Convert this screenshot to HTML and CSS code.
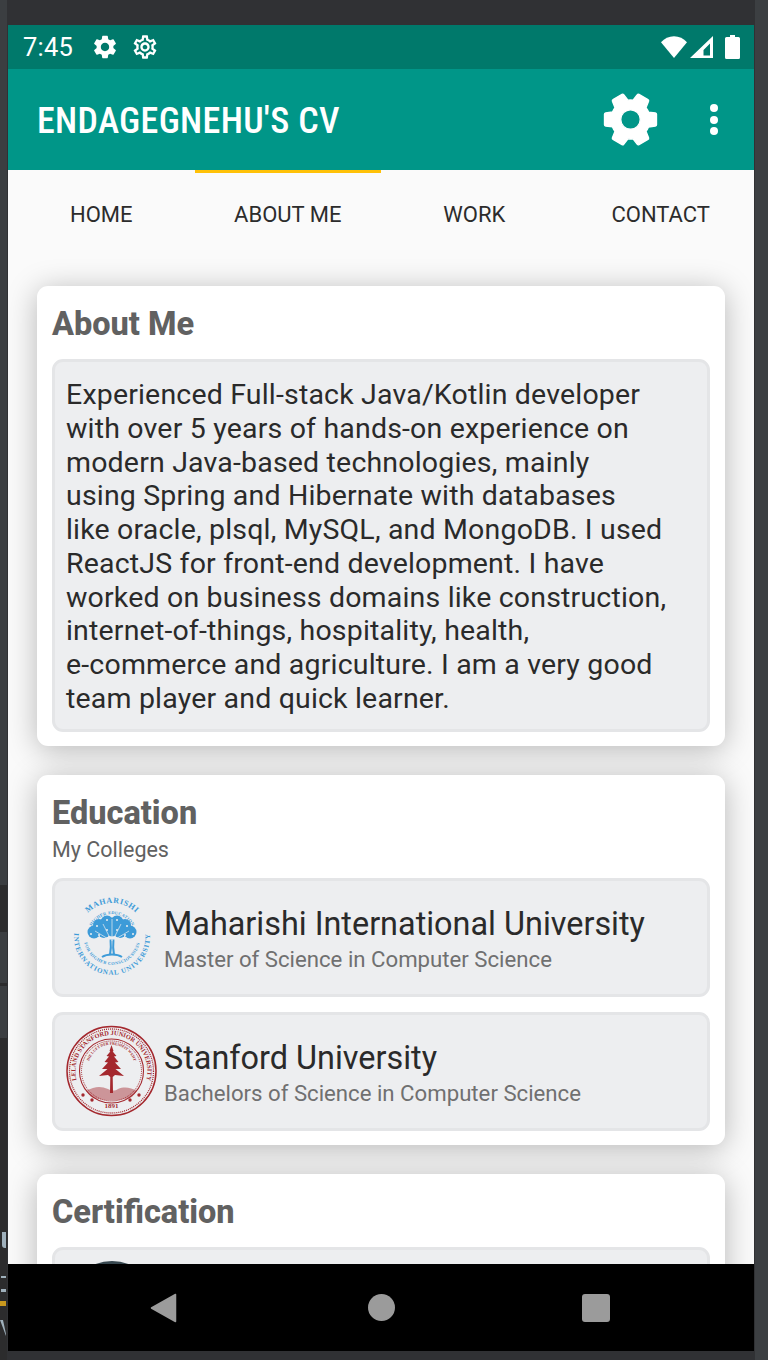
FILE: index.html
```html
<!DOCTYPE html>
<html lang="en">
<head>
  <meta charset="UTF-8">
  <title>Endagegnehu's CV</title>
  <link rel="stylesheet" href="styles.css">
</head>
<body>
  <div class="strip">
    <span class="strip-light strip-a"></span>
    <span class="strip-light strip-b"></span>
    <span class="strip-light strip-c"></span>
    <span class="mark mark-l"></span>
    <span class="mark mark-dot1"></span>
    <span class="mark mark-dot2"></span>
    <span class="mark mark-bar"></span>
    <svg class="mark-v" viewBox="0 0 7 16"><path d="M0 0h3l3 14v2z"/></svg>
  </div>
  <div class="strip-right"></div>

  <div class="phone">
    <div class="status-bar">
      <span class="clock">7:45</span>
      <svg class="status-gear" viewBox="0 0 24 24"><path d="M19.14 12.94c.04-.3.06-.61.06-.94 0-.32-.02-.64-.07-.94l2.03-1.58c.18-.14.23-.41.12-.61l-1.92-3.32c-.12-.22-.37-.29-.59-.22l-2.39.96c-.5-.38-1.03-.7-1.62-.94l-.36-2.54c-.04-.24-.24-.41-.48-.41h-3.84c-.24 0-.43.17-.47.41l-.36 2.54c-.59.24-1.13.57-1.62.94l-2.39-.96c-.22-.08-.47 0-.59.22L2.74 8.87c-.12.21-.08.47.12.61l2.03 1.58c-.05.3-.09.63-.09.94s.02.64.07.94l-2.03 1.58c-.18.14-.23.41-.12.61l1.92 3.32c.12.22.37.29.59.22l2.39-.96c.5.38 1.03.7 1.62.94l.36 2.54c.05.24.24.41.48.41h3.84c.24 0 .44-.17.47-.41l.36-2.54c.59-.24 1.13-.56 1.62-.94l2.39.96c.22.08.47 0 .59-.22l1.92-3.32c.12-.22.07-.47-.12-.61l-2.01-1.58zM12 15.6c-1.98 0-3.6-1.62-3.6-3.6s1.62-3.6 3.6-3.6 3.6 1.62 3.6 3.6-1.62 3.6-3.6 3.6z"/></svg>
      <svg class="status-gear" viewBox="0 0 24 24"><path d="M19.43 12.98c.04-.32.07-.64.07-.98 0-.34-.03-.66-.07-.98l2.11-1.65c.19-.15.24-.42.12-.64l-2-3.46c-.09-.16-.26-.25-.44-.25-.06 0-.12.01-.17.03l-2.49 1c-.52-.4-1.08-.73-1.69-.98l-.38-2.65C14.46 2.18 14.25 2 14 2h-4c-.25 0-.46.18-.49.42l-.38 2.65c-.61.25-1.17.59-1.69.98l-2.49-1c-.06-.02-.12-.03-.18-.03-.17 0-.34.09-.43.25l-2 3.46c-.13.22-.07.49.12.64l2.11 1.65c-.04.32-.07.65-.07.98 0 .33.03.66.07.98l-2.11 1.65c-.19.15-.24.42-.12.64l2 3.46c.09.16.26.25.44.25.06 0 .12-.01.17-.03l2.49-1c.52.4 1.08.73 1.69.98l.38 2.65c.03.24.24.42.49.42h4c.25 0 .46-.18.49-.42l.38-2.65c.61-.25 1.17-.59 1.69-.98l2.49 1c.06.02.12.03.18.03.17 0 .34-.09.43-.25l2-3.46c.12-.22.07-.49-.12-.64l-2.11-1.65zm-1.98-1.71c.04.31.05.52.05.73 0 .21-.02.43-.05.73l-.14 1.13.89.7 1.08.84-.7 1.21-1.27-.51-1.04-.42-.9.68c-.43.32-.84.56-1.25.73l-1.06.43-.16 1.13-.2 1.35h-1.4l-.19-1.35-.16-1.13-1.06-.43c-.43-.18-.83-.41-1.23-.71l-.91-.7-1.06.43-1.27.51-.7-1.21 1.08-.84.89-.7-.14-1.13c-.03-.31-.05-.54-.05-.74s.02-.43.05-.73l.14-1.13-.89-.7-1.08-.84.7-1.21 1.27.51 1.04.42.9-.68c.43-.32.84-.56 1.25-.73l1.06-.43.16-1.13.2-1.35h1.39l.19 1.35.16 1.13 1.06.43c.43.18.83.41 1.23.71l.91.7 1.06-.43 1.27-.51.7 1.21-1.07.85-.89.7.14 1.13zM12 8c-2.21 0-4 1.79-4 4s1.79 4 4 4 4-1.79 4-4-1.79-4-4-4zm0 6c-1.1 0-2-.9-2-2s.9-2 2-2 2 .9 2 2-.9 2-2 2z"/></svg>
      <span class="status-right">
        <svg class="wifi" viewBox="0 0 26 22"><path d="M13 22 0 6.2C3.4 2.4 8 .2 13 .2s9.6 2.2 13 6z"/></svg>
        <svg class="signal" viewBox="0 0 23 22"><path d="M23 0v22H0zM20 7.500 13.500 14V19.500H20z" fill-rule="evenodd"/></svg>
        <svg class="battery" viewBox="0 0 15 24"><path d="M5 0h5v2h3.5A1.5 1.5 0 0 1 15 3.5V22.500A1.5 1.5 0 0 1 13.5 24H1.5A1.5 1.5 0 0 1 0 22.500V3.5A1.5 1.5 0 0 1 1.5 2H5z"/></svg>
      </span>
    </div>

    <header class="app-bar">
      <h1 class="app-title">ENDAGEGNEHU'S CV</h1>
      <svg class="app-gear" viewBox="0 0 24 24"><path d="M19.14 12.94c.04-.3.06-.61.06-.94 0-.32-.02-.64-.07-.94l2.03-1.58c.18-.14.23-.41.12-.61l-1.92-3.32c-.12-.22-.37-.29-.59-.22l-2.39.96c-.5-.38-1.03-.7-1.62-.94l-.36-2.54c-.04-.24-.24-.41-.48-.41h-3.84c-.24 0-.43.17-.47.41l-.36 2.54c-.59.24-1.13.57-1.62.94l-2.39-.96c-.22-.08-.47 0-.59.22L2.74 8.87c-.12.21-.08.47.12.61l2.03 1.58c-.05.3-.09.63-.09.94s.02.64.07.94l-2.03 1.58c-.18.14-.23.41-.12.61l1.92 3.32c.12.22.37.29.59.22l2.39-.96c.5.38 1.03.7 1.62.94l.36 2.54c.05.24.24.41.48.41h3.84c.24 0 .44-.17.47-.41l.36-2.54c.59-.24 1.13-.56 1.62-.94l2.39.96c.22.08.47 0 .59-.22l1.92-3.32c.12-.22.07-.47-.12-.61l-2.01-1.58zM12 15.6c-1.98 0-3.6-1.62-3.6-3.6s1.62-3.6 3.6-3.6 3.6 1.62 3.6 3.6-1.62 3.6-3.6 3.6z"/></svg>
      <div class="overflow-dots"><i></i><i></i><i></i></div>
    </header>

    <nav class="tabs">
      <a class="tab">HOME</a>
      <a class="tab active">ABOUT ME</a>
      <a class="tab">WORK</a>
      <a class="tab">CONTACT</a>
    </nav>

    <main class="content">
      <section class="card">
        <h2 class="card-title">About Me</h2>
        <div class="box about-text">Experienced Full-stack Java/Kotlin developer<br>with over 5 years of hands-on experience on<br>modern Java-based technologies, mainly<br>using Spring and Hibernate with databases<br>like oracle, plsql, MySQL, and MongoDB. I used<br>ReactJS for front-end development. I have<br>worked on business domains like construction,<br>internet-of-things, hospitality, health,<br>e-commerce and agriculture. I am a very good<br>team player and quick learner.</div>
      </section>

      <section class="card">
        <h2 class="card-title">Education</h2>
        <p class="card-sub">My Colleges</p>
        <div class="box school">
          <svg class="seal" viewBox="0 0 92 92">
            <defs>
              <path id="miu-bottom" d="M11 31A38 38 0 1 0 81 31"/>
              <path id="miu-top" d="M21.300 22.600A34 34 0 0 1 70.700 22.600"/>
              <path id="miu-inner-top" d="M25.200 36.300A23 23 0 0 1 66.800 36.300"/>
              <path id="miu-inner-bottom" d="M17.600 43A28.500 28.500 0 1 0 74.400 43"/>
            </defs>
            <text class="miu-text">
              <textPath href="#miu-top" startOffset="50%" text-anchor="middle" font-size="8" letter-spacing=".6">MAHARISHI</textPath>
              <textPath href="#miu-bottom" startOffset="50%" text-anchor="middle" font-size="7" letter-spacing=".9">INTERNATIONAL UNIVERSITY</textPath>
              <textPath href="#miu-inner-top" startOffset="50%" text-anchor="middle" font-size="4.400" letter-spacing=".2">HIGHER EDUCATION</textPath>
              <textPath href="#miu-inner-bottom" startOffset="50%" text-anchor="middle" font-size="4.400" letter-spacing=".4">FOR HIGHER CONSCIOUSNESS</textPath>
            </text>
            <g class="miu-tree">
              <path class="miu-branch" d="M44 64c1-5 1-11 .5-16M48 64c-1-5-1-11-.5-16M36 66c3-2 6-2.500 10-2.500s7 .5 10 2.500"/>
              <circle cx="28" cy="41" r="6.500"/><circle cx="64" cy="41" r="6.500"/>
              <circle cx="33" cy="34" r="6"/><circle cx="59" cy="34" r="6"/>
              <circle cx="41" cy="31" r="6.500"/><circle cx="51" cy="31" r="6.500"/>
              <circle cx="38" cy="41" r="6"/><circle cx="54" cy="41" r="6"/><circle cx="46" cy="39" r="6.500"/>
              <path class="miu-twigs" d="M46 50V28M45 49 37 33M47 49l8-16M44 49 29 40M48 49l15-9"/>
              <g class="miu-specks">
                <circle cx="25" cy="43" r="1"/><circle cx="67" cy="43" r="1"/>
                <circle cx="31" cy="35" r="1"/><circle cx="61" cy="35" r="1"/>
                <circle cx="41" cy="29" r="1"/><circle cx="51" cy="29" r="1"/>
                <circle cx="33" cy="44" r="1"/><circle cx="59" cy="44" r="1"/>
                <circle cx="41" cy="39" r="1"/><circle cx="51" cy="39" r="1"/>
              </g>
            </g>
          </svg>
          <div class="school-text">
            <div class="school-name">Maharishi International University</div>
            <div class="school-degree">Master of Science in Computer Science</div>
          </div>
        </div>
        <div class="box school">
          <svg class="seal" viewBox="0 0 92 92">
            <defs>
              <path id="su-outer" d="M14.300 64A36 36 0 1 1 76.700 64"/>
              <path id="su-motto" d="M23 50A23.500 23.500 0 1 1 68 50"/>
              <path id="su-year" d="M33 83H58"/>
            </defs>
            <circle class="su-ring" cx="45.500" cy="46" r="44.500" stroke-width="1.500"/>
            <circle class="su-ring su-beads" cx="45.500" cy="46" r="42" stroke-width="1.300"/>
            <circle class="su-ring" cx="45.500" cy="46" r="32" stroke-width="1.100"/>
            <circle class="su-ring su-beads" cx="45.500" cy="46" r="30" stroke-width="1"/>
            <text class="su-text">
              <textPath href="#su-outer" startOffset="50%" text-anchor="middle" font-size="6.400">LELAND STANFORD JUNIOR UNIVERSITY</textPath>
              <textPath href="#su-motto" startOffset="50%" text-anchor="middle" font-size="3.800">DIE LUFT DER FREIHEIT WEHT</textPath>
              <textPath href="#su-year" startOffset="50%" text-anchor="middle" font-size="7">1891</textPath>
            </text>
            <g class="su-tree">
              <path class="su-ground" d="M20 66c9-5 15-5 22-2 4 2 7 2 10 0 7-3 13-1 19 2l-5 6c-13 5-29 4-41 0z"/>
              <path d="M45.500 20 43.500 26 44.300 26.500 40.500 31 43 31.500 38.500 37 42 37.500 36 44 41.500 44 33 51 42 50 44.300 52 44 68H47L46.700 52 49 50 58 51 49.500 44H55L49 37.500 52.500 37 48 31.500 50.500 31 46.700 26.500 47.500 26z"/>
              <circle cx="17" cy="70" r="1.700"/><circle cx="26" cy="75" r="1.700"/><circle cx="64" cy="75" r="1.700"/><circle cx="73" cy="70" r="1.700"/>
            </g>
          </svg>
          <div class="school-text">
            <div class="school-name">Stanford University</div>
            <div class="school-degree">Bachelors of Science in Computer Science</div>
          </div>
        </div>
      </section>

      <section class="card">
        <h2 class="card-title">Certification</h2>
        <div class="box school">
          <div class="cert-icon"></div>
        </div>
      </section>
    </main>

    <footer class="nav-bar">
      <svg class="nav-back" viewBox="0 0 27 30"><path d="M25.500 1.500 1.500 15l24 13.500z"/></svg>
      <span class="nav-home"></span>
      <span class="nav-recent"></span>
    </footer>
  </div>
</body>
</html>
```

FILE: styles.css
```css
* {
  box-sizing: border-box;
}
html, body {
  height: 100%;
}
body {
  margin: 0;
  padding: 25px 14px 9px 8px;
  background: #303134;
  font-family: Roboto, "Noto Sans", sans-serif;
  overflow: hidden;
  position: relative;
}

/* bits of the desktop showing around the emulator */
.strip {
  position: absolute;
  left: 0;
  top: 0;
  width: 7px;
  height: 100%;
  background: #2c2c2d;
}
.strip-right {
  position: absolute;
  right: 0;
  top: 0;
  width: 13px;
  height: 100%;
  background: #3c3f42;
}
.strip-light {
  position: absolute;
  left: 0;
  width: 100%;
  background: #3b3e41;
}
.strip-a { top: 0; height: 885px; }
.strip-b { top: 932px; height: 51px; }
.strip-c { top: 986px; height: 52px; }
.mark {
  position: absolute;
  left: 1px;
  background: #9fb0bb;
}
.mark-l { top: 1232px; width: 4px; height: 16px; left: 2px; border-radius: 0 0 0 3px; }
.mark-dot1 { top: 1276px; width: 5px; height: 2px; }
.mark-dot2 { top: 1289px; width: 5px; height: 3px; }
.mark-bar { top: 1301px; width: 6px; height: 5px; left: 0; background: #c8981e; }
.mark-v {
  position: absolute;
  left: 0;
  top: 1320px;
  width: 7px;
  height: 16px;
  fill: #9fb0bb;
}

.phone {
  position: relative;
  height: 100%;
  display: flex;
  flex-direction: column;
  background: #fafafa;
  overflow: hidden;
}

.status-bar {
  height: 44px;
  flex: none;
  display: flex;
  align-items: center;
  padding: 0 14px 0 15px;
  background: #00796b;
  color: #fff;
}
.clock {
  font-size: 25.5px;
  width: 68px;
  letter-spacing: .2px;
}
.status-gear {
  width: 28px;
  height: 28px;
  margin-right: 12px;
  fill: #fff;
}
.status-right {
  margin-left: auto;
  display: flex;
  align-items: center;
  gap: 3px;
  fill: #fff;
}
.wifi { width: 26px; height: 22px; }
.signal { width: 23px; height: 22px; margin-right: 9px; }
.battery { width: 15px; height: 24px; }

.app-bar {
  height: 101px;
  flex: none;
  display: flex;
  align-items: center;
  padding: 0 30px 0 29px;
  background: #009688;
  color: #fff;
}
.app-title {
  margin: 2px auto 0 0;
  font-size: 36px;
  font-weight: 500;
  font-stretch: 75%;
  letter-spacing: .3px;
  white-space: nowrap;
}
.app-gear {
  width: 65px;
  height: 65px;
  fill: #fff;
  stroke: #fff;
  stroke-width: .5;
  stroke-linejoin: round;
  transform: rotate(90deg);
  margin-right: 47px;
}
.overflow-dots {
  display: flex;
  flex-direction: column;
  gap: 3.5px;
  margin-right: 6px;
}
.overflow-dots i {
  width: 8px;
  height: 8px;
  border-radius: 50%;
  background: #fff;
}

.tabs {
  display: flex;
  flex: none;
}
.tab {
  flex: 1;
  padding: 30px 0 23px;
  border-top: 3px solid transparent;
  text-align: center;
  font-size: 22px;
  line-height: 24px;
  color: #2c2c2c;
}
.tab.active {
  border-top-color: #ffc107;
}

.content {
  flex: 1;
  min-height: 0;
  overflow: hidden;
  padding: 36px 29px 0;
  display: flex;
  flex-direction: column;
  gap: 29px;
}
.card {
  flex: none;
  padding: 16px 15px 14px;
  background: #fff;
  border-radius: 11px;
  box-shadow: 0 4px 30px rgba(0,0,0,.27);
}
.card-title {
  margin: 0 0 12px;
  font-size: 32.5px;
  line-height: 45px;
  font-weight: 800;
  color: #616161;
}
.card-title + .card-sub {
  margin-top: -12px;
}
.card-sub {
  margin-bottom: 15px;
  font-size: 21.5px;
  line-height: 27px;
  color: #616161;
}
.box {
  border: 3px solid #e4e5e7;
  border-radius: 11px;
  background: #edeef0;
}
.about-text {
  padding: 16px 11px 13px;
  font-size: 28.5px;
  letter-spacing: .18px;
  line-height: 33.75px;
  color: #2a2a2a;
}
.school {
  display: flex;
  align-items: center;
  height: 119px;
  padding: 0 11px;
  gap: 6px;
}
.school + .school {
  margin-top: 15px;
}
.seal {
  width: 92px;
  height: 92px;
  flex: none;
}
.school-text {
  padding-top: 4px;
}
.school-name {
  font-size: 32.4px;
  line-height: 40px;
  color: #2a2a2a;
}
.school-degree {
  font-size: 22.2px;
  line-height: 30px;
  color: #707070;
}
.miu-text {
  fill: #3d9bd8;
  font-family: "Liberation Serif", serif;
  font-weight: 700;
}
.miu-tree {
  fill: #3d9bd8;
}
.miu-branch {
  fill: none;
  stroke: #3d9bd8;
  stroke-width: 2;
}
.miu-twigs {
  fill: none;
  stroke: #edeef0;
  stroke-width: .7;
}
.miu-specks {
  fill: #edeef0;
}
.su-ring {
  fill: none;
  stroke: #a4282e;
}
.su-beads {
  stroke-dasharray: 1 1;
}
.su-text {
  fill: #a4282e;
  font-family: "Liberation Serif", serif;
  font-weight: 700;
}
.su-tree {
  fill: #a4282e;
}
.su-ground {
  opacity: .45;
}
.cert-icon {
  width: 92px;
  height: 92px;
  flex: none;
  margin-top: 11px;
  border-radius: 50%;
  background: #37474f;
  align-self: flex-start;
}

.nav-bar {
  height: 87px;
  flex: none;
  position: relative;
  z-index: 1;
  display: flex;
  align-items: center;
  padding-left: 142px;
  background: #000;
}
.nav-back {
  width: 27px;
  height: 30px;
  fill: #9b9b9b;
  stroke: #9b9b9b;
  stroke-width: 1.5;
  stroke-linejoin: round;
  margin-right: 191px;
}
.nav-home {
  width: 27px;
  height: 27px;
  border-radius: 50%;
  background: #9b9b9b;
  margin-right: 187px;
}
.nav-recent {
  width: 28px;
  height: 28px;
  border-radius: 3px;
  background: #9b9b9b;
}
```
